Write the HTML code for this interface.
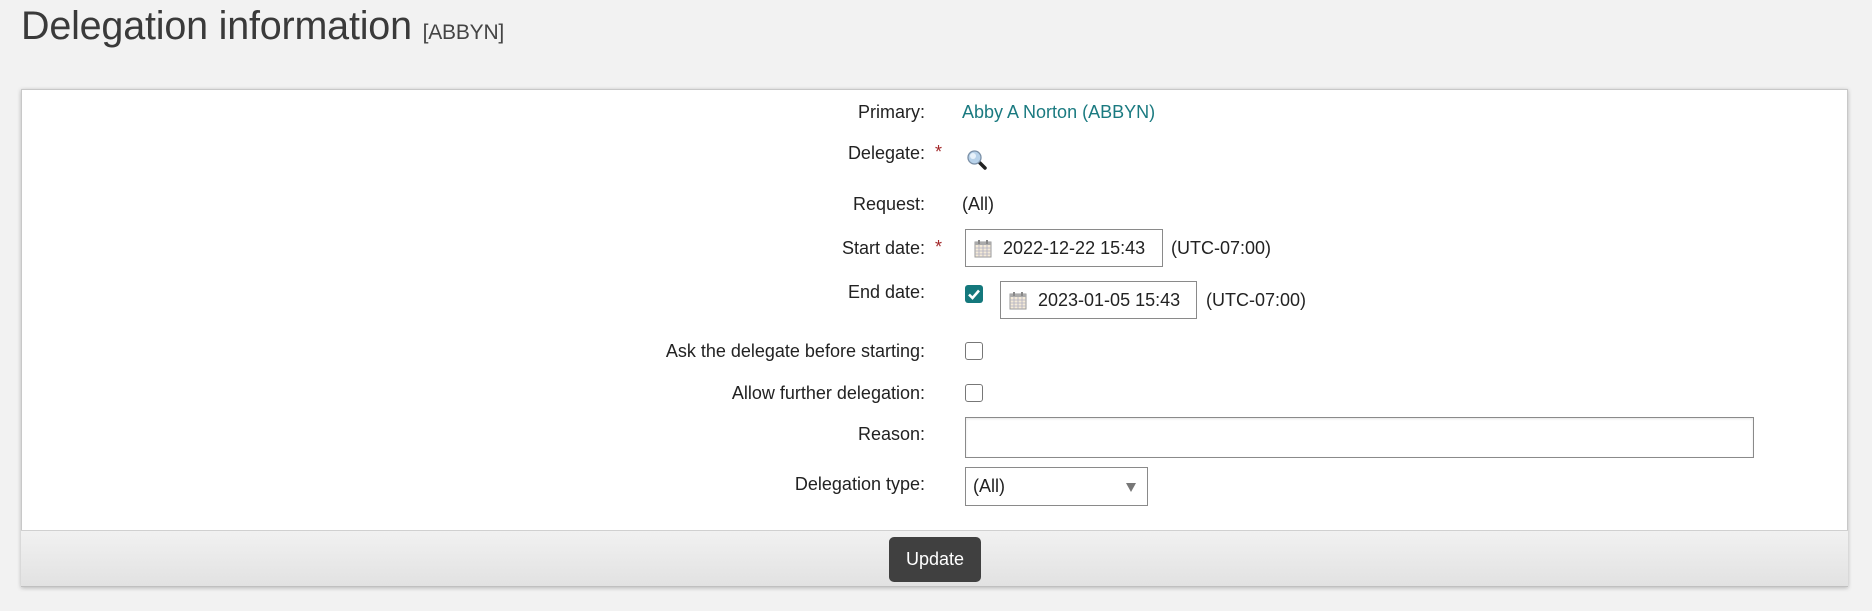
<!DOCTYPE html>
<html><head><meta charset="utf-8"><style>
*{box-sizing:border-box;margin:0;padding:0}
body{width:1872px;height:611px;background:#f2f2f2;font-family:"Liberation Sans",sans-serif;color:#222;position:relative;overflow:hidden}
.a{position:absolute}
h1{position:absolute;left:21px;top:1px;font-weight:normal;font-size:39.5px;color:#3a3a3a;line-height:50px;letter-spacing:-0.2px}
h1 span{font-size:21px;color:#444}
.panel{left:21px;top:89px;width:1827px;height:498px;background:#fff;border:1px solid #c8c8c8;box-shadow:0 1px 4px rgba(0,0,0,.25)}
.foot{left:21px;top:530px;width:1827px;height:57px;background:linear-gradient(#f1f1f1,#e2e2e2);border-top:1px solid #d0d0d0;border-bottom:1px solid #c0c0c0}
.lbl{position:absolute;right:947px;font-size:18px;line-height:24px;text-align:right;white-space:nowrap;color:#222}
.val{position:absolute;left:962px;font-size:18px;line-height:24px;white-space:nowrap}
.star{position:absolute;left:935px;color:#a3282a;font-size:18px;line-height:24px}
.box{position:absolute;border:1px solid #8a8a8a;background:#fff}
.cb{position:absolute;width:18px;height:18px;border:1.5px solid #777;border-radius:3px;background:#fff}
.date{font-size:18px;line-height:36px;padding-left:37px}
.cal{position:absolute;left:8px;top:9px}
.btn{left:889px;top:537px;width:92px;height:45px;background:#404040;border-radius:5px;color:#fff;font-size:18px;line-height:45px;text-align:center}
</style></head><body>
<h1>Delegation information <span>[ABBYN]</span></h1>
<div class="a panel"></div>
<div class="a foot"></div>

<div class="lbl" style="top:100px">Primary:</div>
<div class="val" style="top:100px;color:#1a7a80">Abby A Norton (ABBYN)</div>

<div class="lbl" style="top:141px">Delegate:</div>
<div class="star" style="top:140px">*</div>
<svg class="a" style="left:966px;top:149px" width="22" height="22" viewBox="0 0 22 22"><line x1="12" y1="12" x2="19" y2="19" stroke="#222" stroke-width="3.5" stroke-linecap="round"/><circle cx="8.5" cy="8.5" r="6.5" fill="#b8d2ea" stroke="#7a8fa6" stroke-width="1.3"/><circle cx="7" cy="7" r="3" fill="#e8f2fb"/></svg>

<div class="lbl" style="top:192px">Request:</div>
<div class="val" style="top:192px">(All)</div>

<div class="lbl" style="top:236px">Start date:</div>
<div class="star" style="top:235px">*</div>
<div class="box date" style="left:965px;top:229px;width:198px;height:38px">2022-12-22 15:43
<svg class="cal" width="18" height="19" viewBox="0 0 18 19"><rect x="1" y="3" width="16" height="15" fill="#f4ead8" stroke="#9a9a9a"/><rect x="1" y="3" width="16" height="3" fill="#aaa"/><path d="M5 1v4M13 1v4" stroke="#888" stroke-width="2"/><path d="M1 9h16M1 12h16M1 15h16M5 6v12M9 6v12M13 6v12" stroke="#b0b0c0" stroke-width=".8"/></svg></div>
<div class="val" style="left:1171px;top:236px">(UTC-07:00)</div>

<div class="lbl" style="top:280px">End date:</div>
<div class="a" style="left:965px;top:285px;width:18px;height:18px;background:#14787c;border-radius:3px"><svg width="18" height="18" viewBox="0 0 18 18"><path d="M4 9.5l3.5 3.5L14 5.5" stroke="#fff" stroke-width="2.6" fill="none"/></svg></div>
<div class="box date" style="left:1000px;top:281px;width:197px;height:38px">2023-01-05 15:43
<svg class="cal" width="18" height="19" viewBox="0 0 18 19"><rect x="1" y="3" width="16" height="15" fill="#f4ead8" stroke="#9a9a9a"/><rect x="1" y="3" width="16" height="3" fill="#aaa"/><path d="M5 1v4M13 1v4" stroke="#888" stroke-width="2"/><path d="M1 9h16M1 12h16M1 15h16M5 6v12M9 6v12M13 6v12" stroke="#b0b0c0" stroke-width=".8"/></svg></div>
<div class="val" style="left:1206px;top:288px">(UTC-07:00)</div>

<div class="lbl" style="top:339px">Ask the delegate before starting:</div>
<div class="cb" style="left:965px;top:342px"></div>

<div class="lbl" style="top:381px">Allow further delegation:</div>
<div class="cb" style="left:965px;top:384px"></div>

<div class="lbl" style="top:422px">Reason:</div>
<div class="box" style="left:965px;top:417px;width:789px;height:41px;box-shadow:inset 0 1px 2px rgba(0,0,0,.1)"></div>

<div class="lbl" style="top:472px">Delegation type:</div>
<div class="box" style="left:965px;top:467px;width:183px;height:39px;font-size:18px;line-height:37px;padding-left:7px">(All)
<svg class="a" style="left:160px;top:15px" width="10" height="9" viewBox="0 0 10 9"><path d="M0 0h10L5 9z" fill="#777"/></svg></div>

<div class="a btn">Update</div>
</body></html>
